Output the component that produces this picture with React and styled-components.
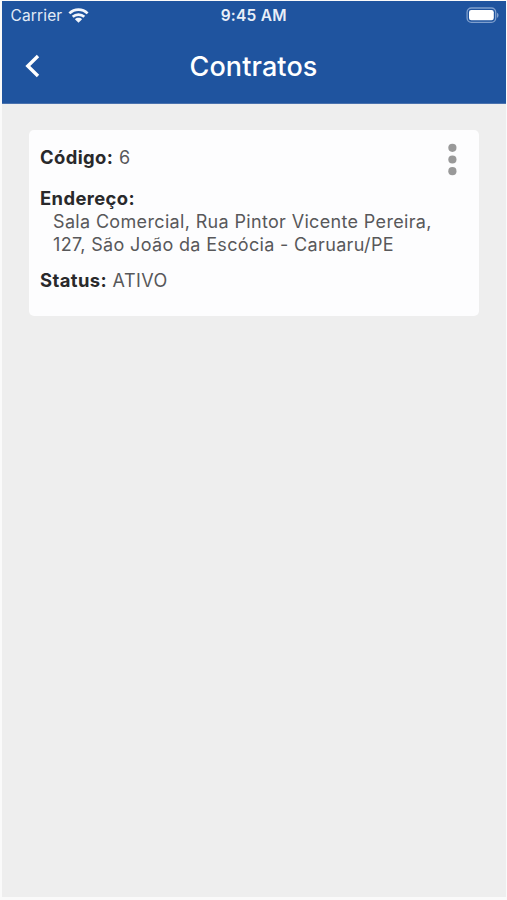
import React from "react";
import styled, { createGlobalStyle } from "styled-components";

const GlobalStyle = createGlobalStyle`
  * { box-sizing: border-box; }
  body { margin: 0; background: #fafafa; }
`;

const Screen = styled.div`
  display: flex;
  flex-direction: column;
  height: 900px;
  width: 507px;
  padding: 1px 1px 3px 2px;
  background: #fafafa;
  font-family: Inter, "Noto Sans", sans-serif;
  overflow: hidden;
`;

const Header = styled.header`
  height: 103px;
  flex: none;
  background: #1f549f;
  border-bottom: 1px solid #4a72ae;
  color: #fff;
`;

const StatusBar = styled.div`
  display: grid;
  grid-template-columns: 1fr auto 1fr;
  align-items: center;
  height: 29px;
  padding: 0 7px 0 8.5px;
  line-height: 20px;
`;

const Carrier = styled.span`
  display: flex;
  align-items: center;
  gap: 6px;
  font-size: 15.5px;
  letter-spacing: 0.15px;
  color: #e3ebf6;
`;

const Clock = styled.span`
  padding-right: 2px;
  font-size: 15.5px;
  font-weight: 600;
  letter-spacing: 0.25px;
  color: #e9eff8;
`;

const BatterySlot = styled.span`
  display: flex;
  justify-content: flex-end;
`;

const NavBar = styled.div`
  display: grid;
  grid-template-columns: 60px 1fr 60px;
  align-items: center;
  height: 73px;
`;

const BackButton = styled.button`
  display: flex;
  align-items: center;
  height: 48px;
  padding: 0 0 2px 21px;
  border: 0;
  background: none;
  color: #fff;
`;

const Title = styled.h1`
  margin: 0;
  padding-right: 1px;
  font-size: 27px;
  line-height: 36px;
  font-weight: 540;
  letter-spacing: 0.1px;
  text-align: center;
`;

const Content = styled.main`
  flex: 1;
  padding: 26px 27px;
  background: #eee;
`;

const Card = styled.article`
  display: flex;
  justify-content: space-between;
  height: 186px;
  padding: 15.5px 20px 0 11px;
  border-radius: 5px;
  background: #fdfdfe;
`;

const Details = styled.div`
  display: flex;
  flex-direction: column;
  font-size: 18px;
  line-height: 23px;
  color: #58585a;
`;

const Field = styled.div`
  margin-bottom: ${({ $gap }) => $gap}px;
`;

const Label = styled.strong`
  font-size: 18.4px;
  font-weight: 650;
  letter-spacing: 0.4px;
  color: #29292b;
`;

const Value = styled.span`
  margin-left: 0.5px;
  letter-spacing: 0.45px;
`;

const Address = styled.div`
  padding-left: 13px;
  letter-spacing: 0.34px;
  white-space: nowrap;
`;

const MenuButton = styled.button`
  display: flex;
  height: 33px;
  padding: 0;
  margin-top: -2.5px;
  border: 0;
  background: none;
`;

const WifiIcon = () => (
  <svg width="21" height="16" viewBox="0 0 21 16" fill="none" stroke="#f2f6fc" strokeWidth="2.7">
    <path d="M1.4 5.4C6.5.4 14.5.4 19.6 5.4" />
    <path d="M4.7 8.8c3.2-3 8.4-3 11.6 0" />
    <path d="M6.9 11.2c2-1.9 5.2-1.9 7.2 0L10.5 14.8z" fill="#f2f6fc" stroke="none" />
  </svg>
);

const BatteryIcon = () => (
  <svg width="33" height="17" viewBox="0 0 33 17">
    <rect x="1.1" y="1" width="28.6" height="14.3" rx="4.3" fill="none" stroke="#7f9fcd" strokeWidth="1.3" />
    <rect x="3" y="3" width="24.8" height="10.3" rx="2.3" fill="#fff" />
    <path d="M31 5.7c2 .8 2 4.3 0 5.1z" fill="#7f9fcd" />
  </svg>
);

const BackIcon = () => (
  <svg width="18" height="24" viewBox="0 0 18 24" fill="none" stroke="currentColor" strokeWidth="3.4">
    <path d="M15 2 4.8 12 15 22" />
  </svg>
);

const DotsIcon = () => (
  <svg width="14" height="33" viewBox="0 0 14 33" fill="#999">
    <circle cx="7.4" cy="4.8" r="4.1" />
    <circle cx="7.4" cy="16.5" r="4.1" />
    <circle cx="7.4" cy="28.2" r="4.1" />
  </svg>
);

export default function App() {
  return (
    <Screen>
      <GlobalStyle />
      <Header>
        <StatusBar>
          <Carrier>Carrier <WifiIcon /></Carrier>
          <Clock>9:45 AM</Clock>
          <BatterySlot><BatteryIcon /></BatterySlot>
        </StatusBar>
        <NavBar>
          <BackButton aria-label="Voltar"><BackIcon /></BackButton>
          <Title>Contratos</Title>
        </NavBar>
      </Header>
      <Content>
        <Card>
          <Details>
            <Field $gap={18}><Label>Código:</Label> <Value>6</Value></Field>
            <Field $gap={13}>
              <Label>Endereço:</Label>
              <Address>
                Sala Comercial, Rua Pintor Vicente Pereira,<br />
                127, São João da Escócia - Caruaru/PE
              </Address>
            </Field>
            <Field $gap={0}><Label>Status:</Label> <Value>ATIVO</Value></Field>
          </Details>
          <MenuButton aria-label="Opções"><DotsIcon /></MenuButton>
        </Card>
      </Content>
    </Screen>
  );
}
